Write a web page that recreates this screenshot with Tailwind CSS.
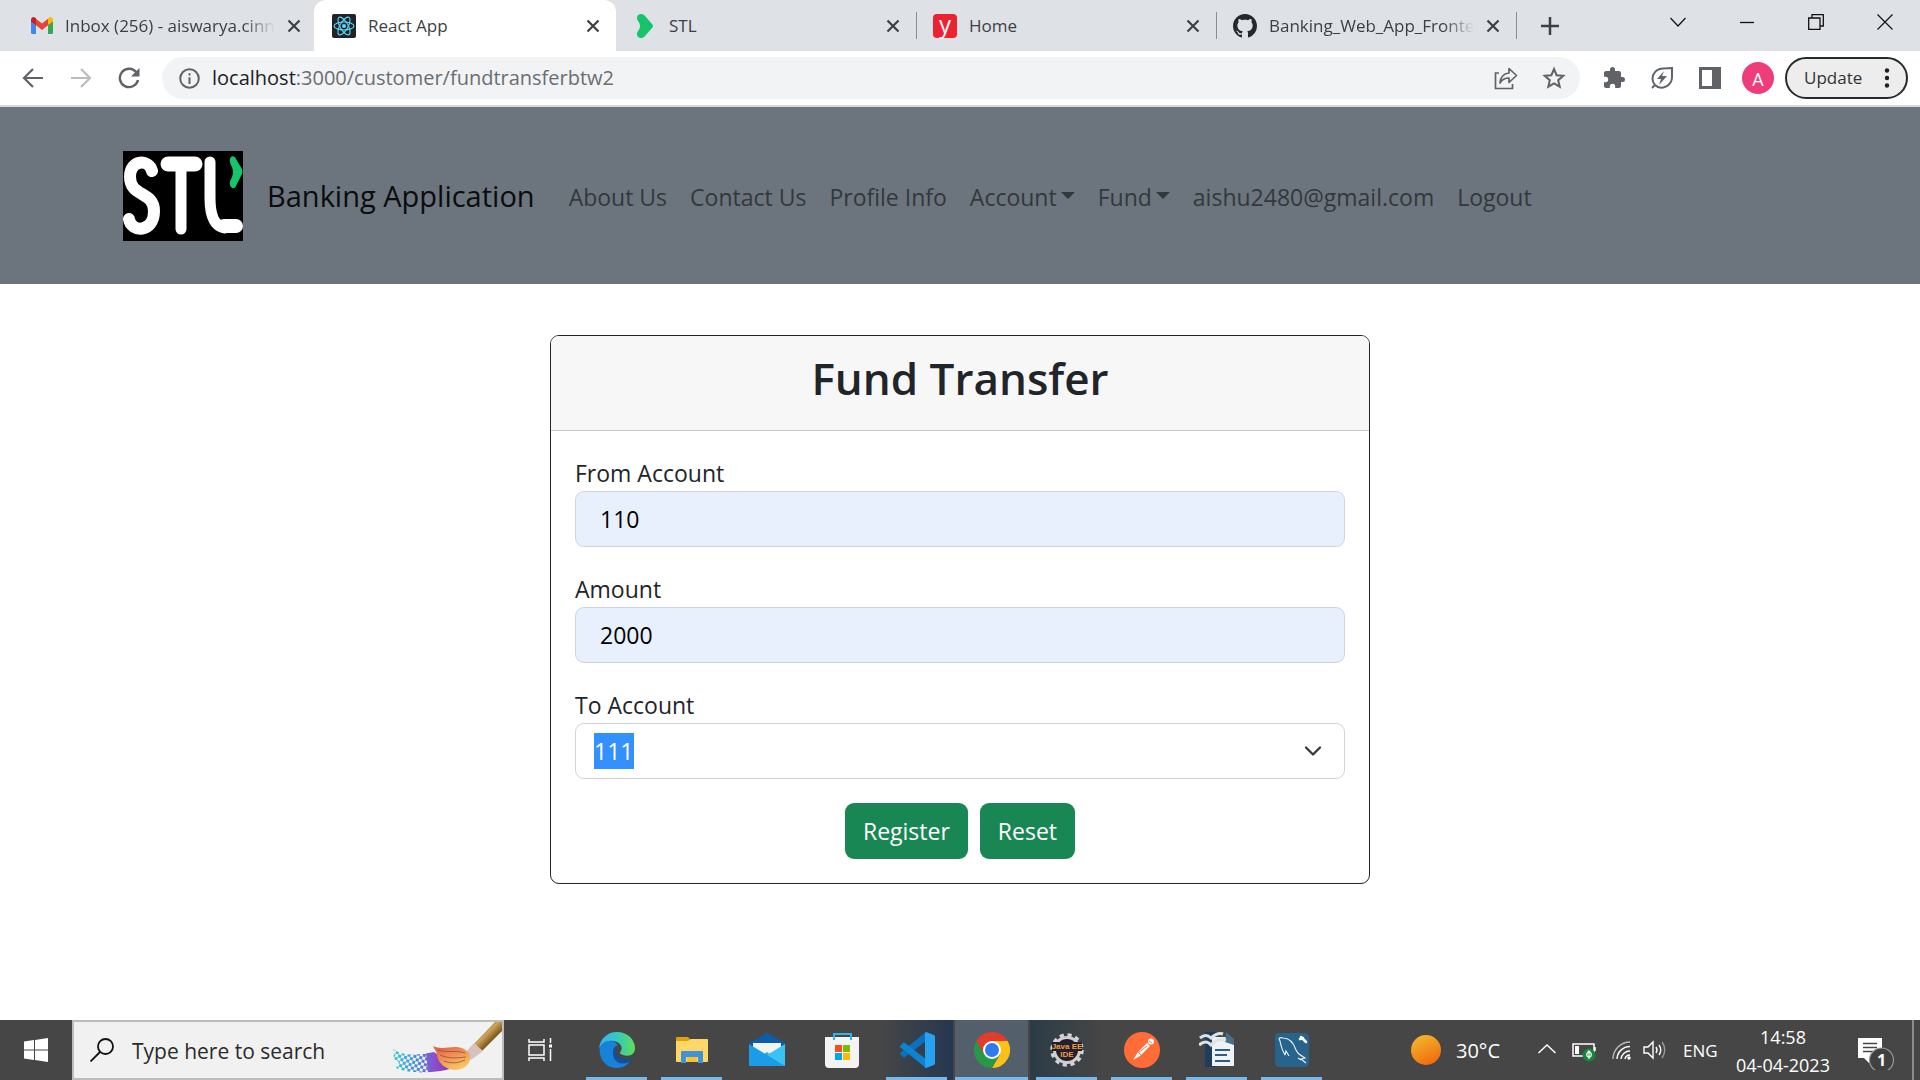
<!DOCTYPE html>
<html lang="en">
<head>
<meta charset="utf-8">
<meta name="viewport" content="width=device-width, initial-scale=1">
<title>React App</title>
<script src="https://cdn.jsdelivr.net/npm/@tailwindcss/browser@4"></script>
</head>
<body class="flex min-h-screen flex-col bg-white font-['Open_Sans','Noto_Sans',sans-serif] text-[#212529]">

<!-- Tab strip -->
<header class="shrink-0">
  <div class="flex h-[51px] items-stretch bg-[#dee1e6] text-[17px] text-[#3c4043]">
    <div class="flex w-[314px] items-center rounded-br-xl pl-[31px] pr-4">
      <svg class="w-[22px] shrink-0" viewBox="0 0 22 17"><path fill="#4285f4" d="M0 3v12.500Q0 17 1.500 17H5V7z"/><path fill="#34a853" d="M17 7v10h3.500q1.500 0 1.500-1.500V3z"/><path fill="#ea4335" d="M4 1l7 5.500L18 1v6.500l-7 5.500-7-5.500z"/><path fill="#c5221f" d="M0 3Q0 0 3 0l2 1.300V8L0 4.500z"/><path fill="#fbbc04" d="M22 3q0-3-3-3l-2 1.300V8l5-3.500z"/></svg>
      <span class="ml-3 flex-1 whitespace-nowrap mask-r-from-85% mask-r-to-100%">Inbox (256) - aiswarya.cinn</span>
      <button aria-label="Close tab" class="ml-3 shrink-0"><svg class="w-3.5" viewBox="0 0 14 14" stroke="#3c4043" stroke-width="2.200"><path d="M1.500 1.500l11 11M12.500 1.500l-11 11"/></svg></button>
    </div>
    <div class="flex w-[302px] items-center rounded-t-xl bg-white pl-[18px] pr-4">
      <svg class="w-6 shrink-0" viewBox="0 0 24 24"><rect width="24" height="24" rx="2" fill="#20232a"/><g fill="none" stroke="#61dafb" stroke-width="1.100"><ellipse cx="12" cy="12" rx="10" ry="4"/><ellipse cx="12" cy="12" rx="10" ry="4" transform="rotate(60 12 12)"/><ellipse cx="12" cy="12" rx="10" ry="4" transform="rotate(120 12 12)"/></g><circle cx="12" cy="12" r="2" fill="#61dafb"/></svg>
      <span class="ml-3 flex-1">React App</span>
      <button aria-label="Close tab"><svg class="w-3.5" viewBox="0 0 14 14" stroke="#3c4043" stroke-width="2.200"><path d="M1.500 1.500l11 11M12.500 1.500l-11 11"/></svg></button>
    </div>
    <div class="flex w-[300px] items-center rounded-bl-xl pl-[21px] pr-4">
      <svg class="w-4 shrink-0" viewBox="0 0 16 24"><path fill="#16c46c" d="M0 4C0-1 6-1 8 2l7 8q2 2 0 4l-7 8c-2 3-8 3-8-2 0-3 3-4 3-8S0 7 0 4z"/></svg>
      <span class="ml-4 flex-1">STL</span>
      <button aria-label="Close tab"><svg class="w-3.5" viewBox="0 0 14 14" stroke="#3c4043" stroke-width="2.200"><path d="M1.500 1.500l11 11M12.500 1.500l-11 11"/></svg></button>
    </div>
    <div class="my-3 w-px shrink-0 bg-[#8a8d91]"></div>
    <div class="flex w-[299px] items-center pl-4 pr-4">
      <span class="flex size-6 shrink-0 items-center justify-center rounded-sm bg-[#ec2230] pb-1 text-2xl leading-6 text-white">y</span>
      <span class="ml-3 flex-1">Home</span>
      <button aria-label="Close tab"><svg class="w-3.5" viewBox="0 0 14 14" stroke="#3c4043" stroke-width="2.200"><path d="M1.500 1.500l11 11M12.500 1.500l-11 11"/></svg></button>
    </div>
    <div class="my-3 w-px shrink-0 bg-[#8a8d91]"></div>
    <div class="flex w-[299px] items-center pl-4 pr-4">
      <svg class="w-6 shrink-0" viewBox="0 0 16 16"><path fill="#24292f" fill-rule="evenodd" d="M8 0C3.580 0 0 3.580 0 8c0 3.540 2.290 6.530 5.470 7.590.4.070.55-.17.55-.38 0-.19-.01-.82-.01-1.490-2.010.37-2.530-.49-2.690-.94-.09-.23-.48-.94-.82-1.130-.28-.15-.68-.52-.01-.53.63-.01 1.080.58 1.230.82.72 1.210 1.870.87 2.330.66.070-.52.28-.87.51-1.070-1.780-.2-3.640-.89-3.640-3.950 0-.87.31-1.590.82-2.150-.08-.2-.36-1.020.08-2.120 0 0 .67-.21 2.200.82.64-.18 1.320-.27 2-.27s1.360.09 2 .27c1.530-1.040 2.200-.82 2.200-.82.44 1.100.16 1.920.08 2.120.51.56.82 1.270.82 2.150 0 3.070-1.870 3.750-3.650 3.950.29.25.54.73.54 1.480 0 1.070-.01 1.930-.01 2.200 0 .21.15.46.55.38A8.010 8.010 0 0 0 16 8c0-4.420-3.580-8-8-8z"/></svg>
      <span class="ml-3 flex-1 whitespace-nowrap mask-r-from-85% mask-r-to-100%">Banking_Web_App_Fronte</span>
      <button aria-label="Close tab" class="ml-3 shrink-0"><svg class="w-3.5" viewBox="0 0 14 14" stroke="#3c4043" stroke-width="2.200"><path d="M1.500 1.500l11 11M12.500 1.500l-11 11"/></svg></button>
    </div>
    <div class="my-3 w-px shrink-0 bg-[#8a8d91]"></div>
    <button aria-label="New tab" class="ml-6"><svg class="w-[18px]" viewBox="0 0 18 18" stroke="#3c4043" stroke-width="2.500"><path d="M9 0v18M0 9h18"/></svg></button>
    <div class="ml-auto flex items-center gap-[53px] pb-2 pr-[27px]">
      <button aria-label="Search tabs"><svg class="w-4" viewBox="0 0 16 16" fill="none" stroke="#111" stroke-width="1.200"><path d="M.500 4L8 12l7.500-8"/></svg></button>
      <button aria-label="Minimize"><svg class="w-4" viewBox="0 0 16 16" stroke="#111" stroke-width="1.300"><path d="M1 8.500h14"/></svg></button>
      <button aria-label="Restore"><svg class="w-4" viewBox="0 0 16 16" fill="none" stroke="#111" stroke-width="1.300"><path d="M.700 4h11.300v11.300H.700zM4 4V.700h11.300V12H12"/></svg></button>
      <button aria-label="Close window"><svg class="w-4" viewBox="0 0 16 16" stroke="#111" stroke-width="1.200"><path d="M.500.500l15 15M15.500.500l-15 15"/></svg></button>
    </div>
  </div>

  <!-- Address bar -->
  <div class="flex h-14 items-center border-b-2 border-[#dadada] pl-[22px] pr-3">
    <button aria-label="Back"><svg class="w-[22px]" viewBox="0 0 22 22" fill="none" stroke="#5f6368" stroke-width="2.200"><path d="M21 11H2M11 2l-9 9 9 9"/></svg></button>
    <button aria-label="Forward" class="ml-[26px]"><svg class="w-[22px]" viewBox="0 0 22 22" fill="none" stroke="#babcbe" stroke-width="2.200"><path d="M1 11h19M11 2l9 9-9 9"/></svg></button>
    <button aria-label="Reload" class="ml-[26px]"><svg class="w-[22px]" viewBox="0 0 22 22" fill="none" stroke="#5f6368" stroke-width="2.400"><path d="M18.500 5.500A9.200 9.200 0 1 0 20 13"/><path fill="#5f6368" stroke="none" d="M21.500 1v8.500H13z"/></svg></button>
    <div class="ml-[22px] flex h-[42px] flex-1 items-center rounded-full bg-[#f1f3f4] pl-[17px] pr-3.5">
      <svg class="w-[21px] shrink-0" viewBox="0 0 21 21"><circle cx="10.500" cy="10.500" r="9.300" fill="none" stroke="#5f6368" stroke-width="2"/><path stroke="#5f6368" stroke-width="2" d="M10.500 9.300V16M10.500 5.200v2.200"/></svg>
      <span class="ml-3 flex-1 text-xl text-[#6a6e72]"><span class="text-[#202124]">localhost</span>:3000/customer/fundtransferbtw2</span>
      <button aria-label="Share"><svg class="w-6" viewBox="0 0 24 24" fill="none" stroke="#5f6368" stroke-width="1.700"><path d="M5 7H1.500v15.500h17V18"/><path stroke-linejoin="round" d="M6 17c.5-6 3.500-9.500 9-10V2.500l7.500 7-7.500 7V12c-4 0-7 1.500-9 5z"/></svg></button>
      <button aria-label="Bookmark" class="ml-6"><svg class="w-6" viewBox="0 0 24 24" fill="none" stroke="#5f6368" stroke-width="2"><path d="M12 3l2.600 6.200 6.700.6-5.100 4.400 1.500 6.500L12 17.300l-5.700 3.400 1.500-6.500-5.100-4.400 6.700-.6z"/></svg></button>
    </div>
    <div class="ml-[22px] flex items-center gap-6">
      <button aria-label="Extensions"><svg class="w-6" viewBox="0 0 24 24"><path fill="#5f6368" d="M20.500 11H19V7c0-1.100-.9-2-2-2h-4V3.500a2.500 2.500 0 0 0-5 0V5H4c-1.100 0-2 .9-2 2v3.800h1.500a2.700 2.700 0 0 1 0 5.400H2V20c0 1.100.9 2 2 2h3.800v-1.500a2.700 2.700 0 0 1 5.400 0V22H17c1.100 0 2-.9 2-2v-4h1.500a2.500 2.500 0 0 0 0-5z"/></svg></button>
      <button aria-label="Energy saver"><svg class="w-6" viewBox="0 0 24 24" fill="none" stroke="#5f6368" stroke-width="2"><path d="M2 22l3-3M5 19C0 13 3 3 13 2.500l9-.5v9C22 20 11 25 5 19z"/><path fill="#5f6368" stroke="none" d="M14 5l-7 8h4l-2 6 8-9h-5z"/></svg></button>
      <button aria-label="Side panel"><svg class="w-6" viewBox="0 0 24 24"><path fill="#5f6368" fill-rule="evenodd" d="M1 1h22v22H1zM4 4v16h10V4z"/></svg></button>
      <button aria-label="Profile" class="-ml-1 size-8 rounded-full bg-[#ee3d7b] pt-px text-lg leading-8 text-white">A</button>
    </div>
    <button class="ml-[11px] flex h-[42px] w-[123px] items-center justify-between rounded-full border-2 border-[#27292c] bg-[#ededed] pl-[17px] pr-4 text-[17px] text-[#303236]">Update
      <svg class="w-1.5" viewBox="0 0 6 20" fill="#202124"><circle cx="3" cy="2.500" r="2.200"/><circle cx="3" cy="10" r="2.200"/><circle cx="3" cy="17.500" r="2.200"/></svg></button>
  </div>
</header>

<!-- Site navigation -->
<nav class="flex h-[177px] shrink-0 items-center bg-[#6c757d] pl-[123px] text-[23px] text-[#33383c]">
  <a href="#" class="flex items-center text-[29px] text-[#0b0c0d]">
    <svg class="w-[120px]" viewBox="0 0 120 90" role="img" aria-label="STL"><rect width="120" height="90"/><g fill="none" stroke="#fff" stroke-linecap="round" stroke-linejoin="round"><path stroke-width="12" d="M29 20C26 8 7 8 7 26 7 46 31 40 31 60 31 82 8 82 6 68"/><path stroke-width="15" d="M45 13h27"/><path stroke-width="11" d="M58 14v64M87 11v36q0 28 15 30"/><path stroke-width="14" d="M101 75h12"/></g><path fill="#16c46c" d="M107 8c1-4 5-3 6 0l6 10q1 3 0 5l-6 12c-1 3-5 3-6-1-1-5 3-7 3-13s-4-8-3-13z"/></svg>
    <span class="ml-6">Banking Application</span>
  </a>
  <div class="ml-[34px] flex items-center gap-[23px] pt-1">
    <a href="#">About Us</a>
    <a href="#">Contact Us</a>
    <a href="#">Profile Info</a>
    <a href="#" class="flex items-center gap-1">Account<svg class="mb-1 w-3.5" viewBox="0 0 14 14"><path fill="#33383c" d="M0 3h14L7 10z"/></svg></a>
    <a href="#" class="flex items-center gap-1">Fund<svg class="mb-1 w-3.5" viewBox="0 0 14 14"><path fill="#33383c" d="M0 3h14L7 10z"/></svg></a>
    <a href="#">aishu2480@gmail.com</a>
    <a href="#">Logout</a>
  </div>
</nav>

<main class="flex-1 pt-[51px] pb-16">
  <form class="mx-auto w-[820px] max-w-full overflow-hidden rounded-[9px] border border-[#212529] text-[23px]">
    <h1 class="h-[95px] border-b border-[#c8c8c8] bg-[#f7f7f7] pt-3 text-center text-[44px] leading-[60px] font-semibold">Fund Transfer</h1>
    <div class="px-6 pt-6 pb-6">
      <label for="from" class="block h-9 leading-9">From Account</label>
      <input id="from" value="110" class="mb-6 block h-14 w-full rounded-[9px] border border-[#ced4da] bg-[#e8f0fe] px-6 text-black">
      <label for="amount" class="block h-9 leading-9">Amount</label>
      <input id="amount" value="2000" class="mb-6 block h-14 w-full rounded-[9px] border border-[#ced4da] bg-[#e8f0fe] px-6 text-black">
      <label for="to" class="block h-9 leading-9">To Account</label>
      <div class="flex h-14 items-center justify-between rounded-[9px] border border-[#ced4da] pl-[18px] pr-[22px]">
        <select id="to" class="h-9 appearance-none bg-[#3390ff] leading-9 text-white"><option>111</option></select>
        <svg class="w-[18px]" viewBox="0 0 18 18" fill="none" stroke="#343a40" stroke-width="2.300" stroke-linecap="round" stroke-linejoin="round"><path d="M2 5.500l7 7 7-7"/></svg>
      </div>
      <div class="mt-6 flex justify-center gap-3 text-white">
        <button type="submit" class="h-14 rounded-[9px] bg-[#198754] px-[18px]">Register</button>
        <button type="reset" class="h-14 rounded-[9px] bg-[#198754] px-[18px]">Reset</button>
      </div>
    </div>
  </form>
</main>

<!-- Taskbar -->
<footer class="flex h-[60px] shrink-0 items-stretch bg-[#464646] text-white">
  <button aria-label="Start" class="flex w-[72px] items-center justify-center"><svg class="w-6" viewBox="0 0 24 24" fill="#fff"><path d="M0 3.500l10-1.400v9.400H0zM11 2l13-2v11.500H11zM0 12.500h10v9.400L0 20.500zM11 12.500h13V24l-13-2z"/></svg></button>
  <div class="flex w-[432px] items-center border-2 border-[#bdbdbd] bg-[#f1f1f1] pl-4">
    <svg class="w-6 shrink-0" viewBox="0 0 24 24" fill="none" stroke="#111" stroke-width="1.800"><circle cx="15.500" cy="8.500" r="7.500"/><path d="M10 14L.500 23.500"/></svg>
    <input aria-label="Search" placeholder="Type here to search" class="ml-[18px] w-0 flex-1 pt-1 text-[21px] placeholder:text-[#2b2b2b]">
    <svg class="h-[58px] w-28 shrink-0 self-start" viewBox="0 0 112 58">
      <defs>
        <linearGradient id="paint"><stop offset="0" stop-color="#2fd0d8"/><stop offset=".45" stop-color="#4f7fd8"/><stop offset=".65" stop-color="#8d4fd0"/><stop offset="1" stop-color="#8a2f9c"/></linearGradient>
        <linearGradient id="bristle" x2=".6" y2="1"><stop offset="0" stop-color="#d9573c"/><stop offset=".5" stop-color="#ee8f56"/><stop offset="1" stop-color="#f9c763"/></linearGradient>
        <linearGradient id="wood" gradientUnits="userSpaceOnUse" x1="92" y1="8" x2="102" y2="18"><stop offset="0" stop-color="#8a6428"/><stop offset=".4" stop-color="#cfa35a"/><stop offset="1" stop-color="#7d5a20"/></linearGradient>
        <pattern id="checks" width="6" height="6" patternUnits="userSpaceOnUse" patternTransform="rotate(12)"><path fill="#f1f1f1" d="M0 0h3v3H0zM3 3h3v3H3z"/></pattern>
      </defs>
      <path fill="url(#paint)" d="M2 26c10 9 26 7 42 4l22 15c-16 6-44 8-60 1l3-6-7-4 3-5z"/>
      <path fill="url(#checks)" d="M0 24c10 9 24 8 36 6l2 22-36-4z"/>
      <path fill="url(#wood)" d="M82 24L105 0h7v9L92 29z"/>
      <path fill="#d5c2bd" d="M75 31l9-10 9 8-12 9z"/>
      <path fill="url(#bristle)" d="M43 24c10 5 21-2 31 3 8 4 8 13 1 18-10 7-25 1-28-11 0-4-2-6-4-10z"/>
      <path fill="none" stroke="#9c4b35" stroke-width=".8" d="M48 28c10 3 18 0 27 3M50 33c9 4 16 3 26 2M54 39c8 3 14 2 21-1"/>
    </svg>
  </div>
  <button aria-label="Task view" class="flex w-[72px] items-center justify-center"><svg class="w-6" viewBox="0 0 24 24" fill="none" stroke="#fff" stroke-width="1.500"><path d="M1 1v3h15V1M1 7h15v10H1zM1 23v-3h15v3M22.500 0v5M22.500 11v12"/><path fill="#fff" stroke="none" d="M21 6.500h3v3h-3z"/></svg></button>

  <div class="flex items-stretch gap-0.5 pl-1">
    <button aria-label="Edge" class="flex w-[73px] flex-col items-center justify-between pt-3"><svg class="w-9" viewBox="0 0 36 36"><defs><linearGradient id="edgeTop"><stop offset="0" stop-color="#35b5ee"/><stop offset=".5" stop-color="#33c8c4"/><stop offset="1" stop-color="#5fe052"/></linearGradient></defs><path fill="#1683d8" d="M1 14C2 8 13 6 19 13c-7 2-6 12 1 15 5 2 10 0 13-2-3 6-8 10-15 10C6 36-1 26 1 14z"/><path fill="#134f9c" d="M14 20c-1 7 6 16 18 9l1-3c-5 2-14 2-16-5-1-4 1-7 1-7s-4 2-4 6z"/><path fill="url(#edgeTop)" d="M0 17C1 6 9 0 18 0c11 0 18 8 18 16 0 7-6 9-12 7-3-1-4-2-2-4 2-3 0-9-8-10C7 8 2 11 0 17z"/></svg><span class="h-[3px] w-[61px] bg-[#76b9ed]"></span></button>
    <button aria-label="File Explorer" class="flex w-[73px] flex-col items-center justify-between pt-3"><svg class="w-9" viewBox="0 0 36 36"><path fill="#e0a010" d="M2 6q0-1 1-1h11l3 3h15v6H2z"/><path fill="#ffd766" d="M2 9h12l3-2h16q1 0 1 1v21q0 1-1 1H3q-1 0-1-1z"/><path fill="#3f93dc" d="M7 31V20q0-1 1-1h20q1 0 1 1v11h-5v-6H12v6z"/><path fill="#fbc12e" d="M13 25h10v5H13z"/></svg><span class="h-[3px] w-[61px] bg-[#76b9ed]"></span></button>
    <button aria-label="Mail" class="flex w-[73px] flex-col items-center pt-3"><svg class="w-9" viewBox="0 0 36 36"><path fill="#0b5cab" d="M0 11L18 1l18 10v6H0z"/><path fill="#f3f3f3" d="M4 11h28v7L18 27 4 18z"/><path fill="#2aa8ea" d="M0 34h36L18 20z"/><path fill="#1a9ce6" d="M0 12l36 22H0z"/><path fill="#38c3f4" d="M36 12v22L18 23z"/></svg></button>
    <button aria-label="Store" class="flex w-[73px] flex-col items-center pt-3"><svg class="w-9" viewBox="0 0 36 36"><path fill="#f4f4f4" d="M1 5h34v27q0 4-4 4H5q-4 0-4-4z"/><path fill="none" stroke="#30b4ee" stroke-width="2" d="M10 8V2h17v6"/><path fill="#f25022" d="M11 13h7v7h-7z"/><path fill="#7fba00" d="M19 13h7v7h-7z"/><path fill="#00a4ef" d="M11 21h7v7h-7z"/><path fill="#ffb900" d="M19 21h7v7h-7z"/></svg></button>
    <button aria-label="Visual Studio Code" class="flex w-[73px] flex-col items-center justify-between bg-linear-to-r from-[#464646] to-[#253750] pt-3"><svg class="w-9" viewBox="0 0 36 36"><path fill="#0a72bd" d="M1 22l3 3q1 1 2 0L27 9V0L1 21z"/><path fill="#0d84d1" d="M1 14l3-3q1-1 2 0l21 16v9L1 15q-1-.5 0-1z"/><path fill="#27a2f0" d="M27 0l8 3q1 .500 1 2v26q0 1.500-1 2l-8 3q-1 0-1-1V1q0-1 1-1z"/></svg><span class="h-[3px] w-[61px] bg-[#76b9ed]"></span></button>
    <button aria-label="Chrome" class="flex w-[73px] flex-col items-center justify-between bg-[#53606b] pt-3"><svg class="w-9" viewBox="0 0 36 36"><path fill="#e33b2e" d="M2.400 9A18 18 0 0 1 33.600 9H18l-7.800 13.500z"/><path fill="#fbc116" d="M33.600 9A18 18 0 0 1 18 36l7.800-13.500L18 9z"/><path fill="#279847" d="M18 36A18 18 0 0 1 2.400 9l7.800 13.500h15.600z"/><circle cx="18" cy="18" r="9" fill="#fff"/><circle cx="18" cy="18" r="7" fill="#2f7bee"/></svg><span class="h-[3px] w-full bg-[#76b9ed]"></span></button>
    <button aria-label="Eclipse" class="flex w-[73px] flex-col items-center justify-between bg-linear-to-r from-[#2a3c47] to-[#464646] pt-3"><svg class="w-9" viewBox="0 0 36 36"><circle cx="18" cy="18" r="14.500" fill="none" stroke="#d4d4d4" stroke-width="4.500" stroke-dasharray="4 3.600"/><circle cx="18" cy="18" r="12.500" fill="#22202e" stroke="#cfcfcf" stroke-width="3"/><path fill="#22202e" d="M3 10h30v9H3z"/><g fill="#f59a3d" font-family="Liberation Sans" font-weight="700" font-size="8" text-anchor="middle"><text x="18" y="17">Java EE</text><text x="18" y="25">IDE</text></g></svg><span class="h-[3px] w-[61px] bg-[#76b9ed]"></span></button>
    <button aria-label="Postman" class="flex w-[73px] flex-col items-center justify-between pt-3"><svg class="w-9" viewBox="0 0 36 36"><circle cx="18" cy="18" r="18" fill="#ff6c37"/><circle cx="27" cy="9.500" r="3" fill="#fff"/><path fill="#fff" d="M23 11l3 3-10 10-7 4 5-8z"/><path stroke="#ff6c37" stroke-width=".9" d="M14 21l9-7M14 20l3 3M25 9l3 2"/></svg><span class="h-[3px] w-[61px] bg-[#76b9ed]"></span></button>
    <button aria-label="Writer" class="flex w-[73px] flex-col items-center justify-between pt-3"><svg class="w-9" viewBox="0 0 36 36"><path fill="#1d3d5a" d="M6 0h12v35H6z"/><path fill="#eef2f5" d="M13 5h14l8 7v22H13z"/><path fill="#476e8d" d="M27 0l8 7v6l-9-3z"/><path stroke="#335b7b" stroke-width="2" d="M16 18h15M16 23h12M16 29h15"/><path fill="none" stroke="#dde2e5" stroke-width="3" d="M1 6q6-5 11 0 7-6 12-4M0 13q7-6 12 0 6-7 15-5"/></svg><span class="h-[3px] w-[61px] bg-[#76b9ed]"></span></button>
    <button aria-label="MySQL Workbench" class="flex w-[73px] flex-col items-center justify-between pt-3"><svg class="w-9" viewBox="0 0 36 36"><rect x="1" y="1" width="34" height="34" rx="4" fill="#28638c"/><path fill="none" stroke="#e3edf3" stroke-width="1.200" d="M11 23C8 18 7 14 6 9 4 6 6 5 9 6c7 0 11 6 13 12 2 5 5 5 9 8l-4 1 5 4M11 23l1-4 3 5M24 26l3 2"/><path stroke="#fff" stroke-width="2.500" stroke-linecap="round" d="M27 5l5 5M26 7l3-1"/></svg><span class="h-[3px] w-[61px] bg-[#76b9ed]"></span></button>
  </div>

  <div class="ml-auto flex items-center text-lg">
    <svg class="w-[30px]" viewBox="0 0 30 30"><defs><linearGradient id="sun" x1=".2" y1="0" x2=".7" y2="1"><stop offset="0" stop-color="#f2b82e"/><stop offset="1" stop-color="#f26a0c"/></linearGradient></defs><circle cx="15" cy="15" r="15" fill="url(#sun)"/></svg>
    <span class="ml-[15px] w-[82px] pt-0.5 text-xl">30°C</span>
    <svg class="w-[18px]" viewBox="0 0 18 18" fill="none" stroke="#fff" stroke-width="1.500"><path d="M.500 12L9 4l8.500 8"/></svg>
    <svg class="ml-4 w-6" viewBox="0 0 24 24"><path fill="none" stroke="#fff" stroke-width="1.500" d="M1 6h21v12H1zM23 9v4"/><path fill="#fff" d="M3 8h4v8H3z"/><circle cx="17" cy="17" r="6.500" fill="#10893e"/><path fill="none" stroke="#fff" stroke-width="1.200" d="M17 13q-3 2.500-2 5l2 1.500 2-1.500q1-2.500-2-5v8"/></svg>
    <svg class="ml-4 w-[19px]" viewBox="0 0 19 19" fill="none" stroke="#fff" stroke-width="1.400"><path stroke="#bbb" d="M1 18A17 17 0 0 1 18 1"/><path d="M5 18A13 13 0 0 1 18 5.500M9 18a9 9 0 0 1 9-8M13 18a5 5 0 0 1 5-4"/><circle cx="17" cy="17" r="1" fill="#fff"/></svg>
    <svg class="ml-3 w-6" viewBox="0 0 24 24" fill="none" stroke="#fff" stroke-width="1.400"><path d="M1 9h4l5-5v16l-5-5H1zM13 9q2 3 0 6M16 7q3.500 5 0 10"/><path stroke="#999" d="M19 4q5.500 8 0 16"/></svg>
    <span class="ml-4 w-[50px] pt-0.5 text-[17px]">ENG</span>
    <div class="w-[100px] pt-0.5 text-center text-lg leading-7"><div>14:58</div><div>04-04-2023</div></div>
    <button aria-label="Notifications" class="ml-[25px]"><svg class="h-10 w-9" viewBox="0 0 36 40"><path fill="#fff" d="M0 8h24v20H11v5l-5-5H0z"/><path stroke="#464646" stroke-width="1.300" d="M5 13.500h14M5 17.500h14M5 21.500h10"/><circle cx="23.500" cy="31" r="12" transform="translate(0 -1)" fill="#404040" stroke="#999" stroke-width="1.200"/><text x="23.500" y="36" fill="#fff" font-size="16" font-weight="700" text-anchor="middle" font-family="Open Sans">1</text></svg></button>
    <div class="ml-[18px] mr-1.5 h-full w-0.5 bg-[#8c8c8c]"></div>
  </div>
</footer>
</body>
</html>
